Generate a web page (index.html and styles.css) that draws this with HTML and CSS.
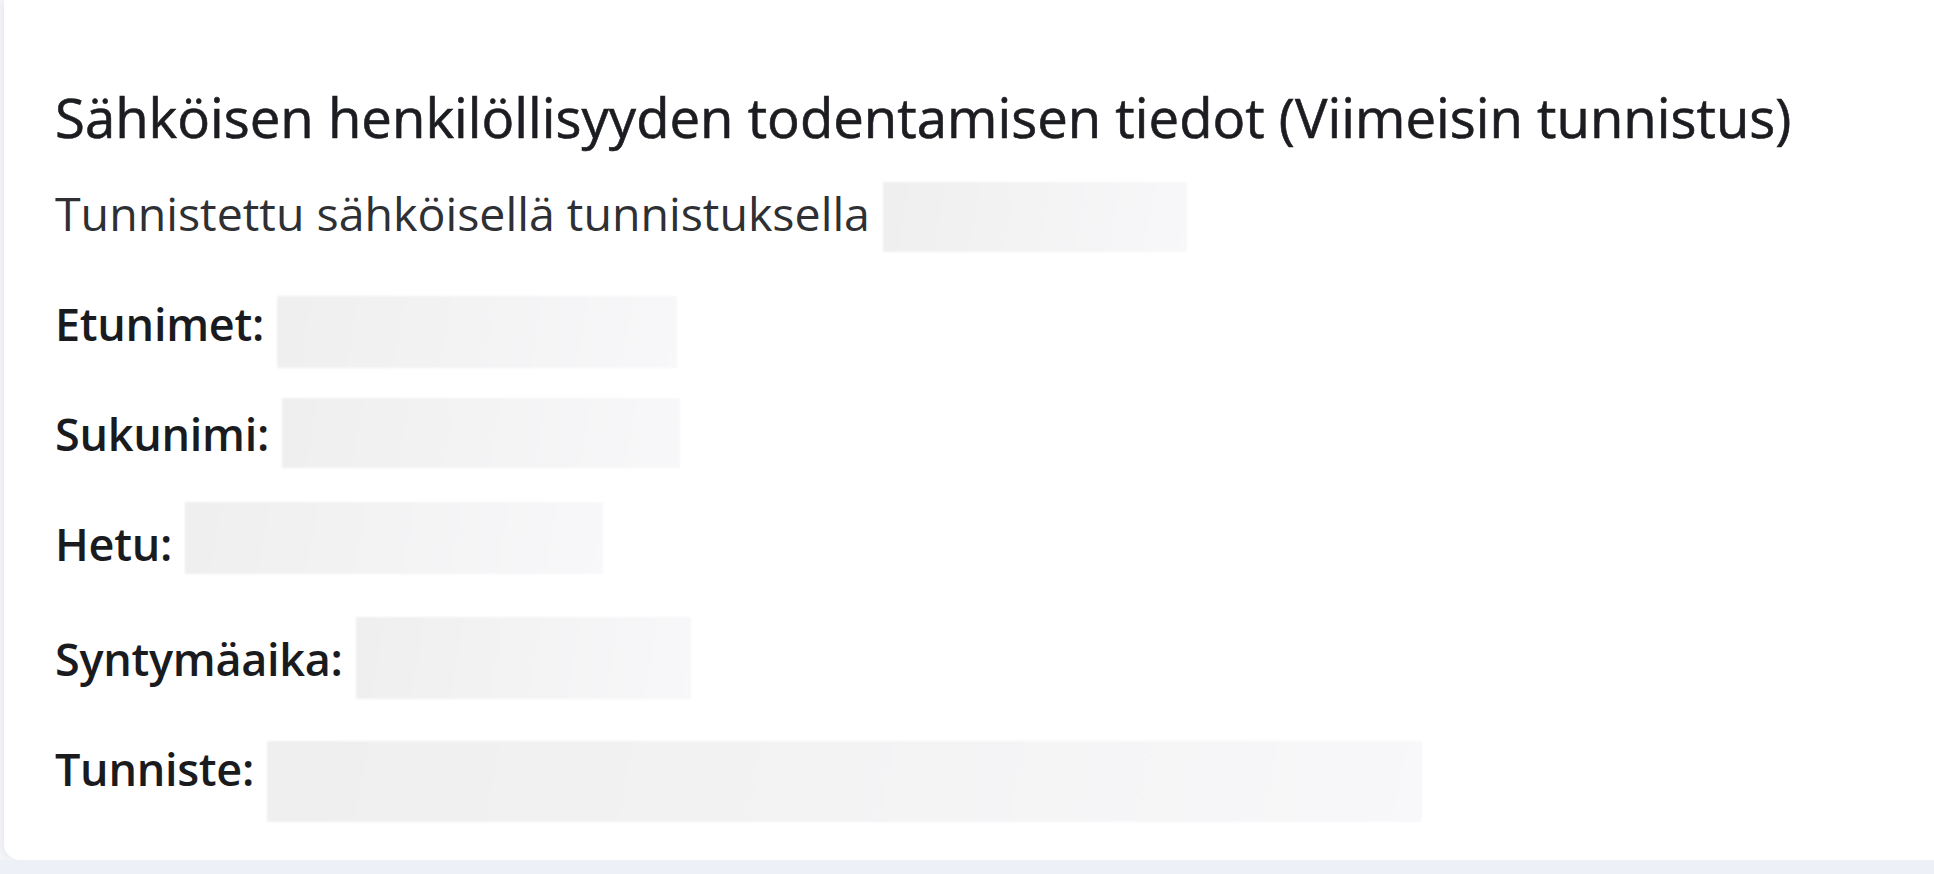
FILE: index.html
```html
<!DOCTYPE html>
<html lang="fi">
<head>
<meta charset="utf-8">
<title>Sähköisen henkilöllisyyden todentamisen tiedot</title>
<link rel="stylesheet" href="styles.css">
</head>
<body>
<main class="page">
  <section class="card">
    <h2 class="card-title">Sähköisen henkilöllisyyden todentamisen tiedot (Viimeisin tunnistus)</h2>
    <div class="info-list">
      <div class="row row-sub">
        <span class="sub-text">Tunnistettu sähköisellä tunnistuksella</span>
        <span class="redact redact-method"></span>
      </div>
      <div class="row">
        <span class="label">Etunimet:</span>
        <span class="redact redact-first"></span>
      </div>
      <div class="row">
        <span class="label">Sukunimi:</span>
        <span class="redact redact-last"></span>
      </div>
      <div class="row">
        <span class="label">Hetu:</span>
        <span class="redact redact-hetu"></span>
      </div>
      <div class="row row-birth">
        <span class="label">Syntymäaika:</span>
        <span class="redact redact-birth"></span>
      </div>
      <div class="row">
        <span class="label">Tunniste:</span>
        <span class="redact redact-id"></span>
      </div>
    </div>
  </section>
  <div class="page-bottom"></div>
</main>
</body>
</html>
```
FILE: styles.css
```css
* { box-sizing: border-box; }

html, body {
  margin: 0;
  padding: 0;
}

body {
  background: #f4f5f9;
  font-family: "Open Sans", "Noto Sans", "DejaVu Sans", sans-serif;
  color: #1e1f22;
  overflow: hidden;
}

.page {
  display: flex;
  flex-direction: column;
  height: 874px;
}

.card {
  margin-left: 4px;
  height: 860px;
  background: #ffffff;
  border-radius: 0 0 0 16px;
  box-shadow: -2px 0 8px rgba(0, 0, 0, 0.05);
  padding: 82px 0 0 51px;
  display: flex;
  flex-direction: column;
}

.card-title {
  margin: 0;
  font-size: 54.5px;
  font-weight: 500;
  line-height: 70px;
  color: #1c1d21;
  -webkit-text-stroke: 0.6px #1c1d21;
}

.info-list {
  display: flex;
  flex-direction: column;
  gap: 34px;
  margin-top: 26px;
}

.row {
  display: flex;
  align-items: center;
  height: 76px;
}

.row-sub {
  height: 70px;
  margin-bottom: 3px;
}

.row-birth {
  margin-top: 5px;
}

.sub-text {
  font-size: 46.5px;
  font-weight: 400;
  color: #2e3034;
}

.label {
  font-size: 45px;
  font-weight: 600;
  color: #1a1b1e;
  letter-spacing: -0.3px;
}

.redact {
  display: block;
  margin-left: 13px;
  background: linear-gradient(100deg, #efefef 0%, #f3f3f4 45%, #f8f8fa 100%);
  filter: blur(1px);
}

.redact-method { width: 304px; height: 70px; margin-top: 8px; }
.redact-first  { width: 400px; height: 72px; margin-top: 18px; }
.redact-last   { width: 398px; height: 70px; }
.redact-hetu   { width: 418px; height: 72px; margin-bottom: 10px; }
.redact-birth  { width: 335px; height: 82px; }
.redact-id     { width: 1155px; height: 81px; margin-top: 26px; }

.page-bottom {
  flex: 1;
  background: #eef0f7;
}
```
